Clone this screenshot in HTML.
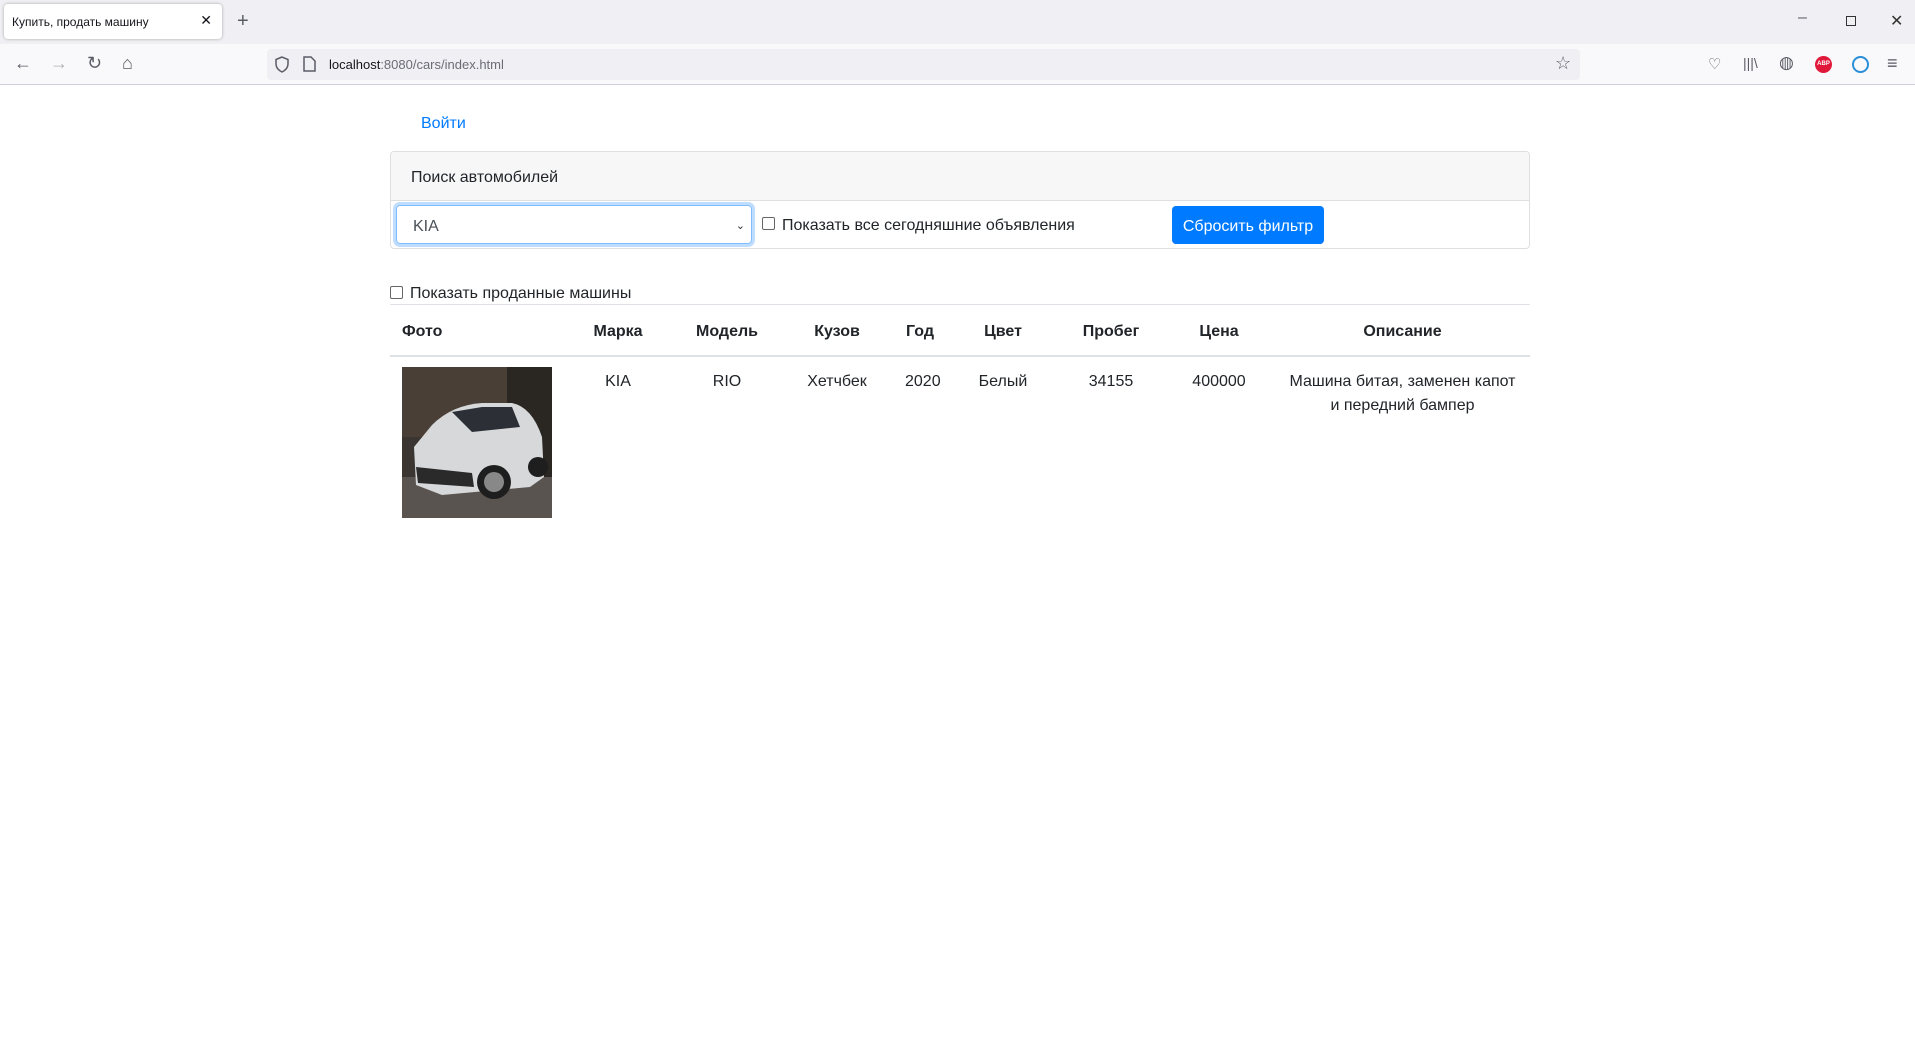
<!DOCTYPE html>
<html><head><meta charset="utf-8"><style>
*{box-sizing:border-box;margin:0;padding:0}
body{width:1915px;height:1038px;overflow:hidden;background:#fff;font-family:"Liberation Sans",sans-serif;color:#212529;position:relative}
.abs{position:absolute}
#tabbar{left:0;top:0;width:1915px;height:44px;background:#f0f0f4}
#tab{left:4px;top:4px;width:218px;height:35px;background:#fff;border-radius:4px;box-shadow:0 0 3px rgba(0,0,0,.3);font-size:12px;padding:11px 0 0 8px;color:#15141a}
#nav{left:0;top:44px;width:1915px;height:41px;background:#f9f9fb;border-bottom:1px solid #cfcfd8}
#url{left:267px;top:49px;width:1313px;height:31px;background:#f0f0f4;border-radius:4px}
.ic{color:#5b5b66;font-size:17px}
.c{font-size:16px;line-height:24px}
table{border-collapse:collapse;table-layout:fixed;position:absolute;left:390px;top:304px;width:1140px;font-size:16px;line-height:24px}
th{font-weight:bold;text-align:center;padding:15px 6px 11px;border-top:1px solid #dee2e6;border-bottom:2px solid #dee2e6}
td{text-align:center;vertical-align:top;padding:13px 12px}
</style></head><body>
<div id="tabbar" class="abs"></div>
<div id="tab" class="abs">Купить, продать машину<span style="position:absolute;right:10px;top:8px;font-size:14px">✕</span></div>
<div class="abs ic" style="left:237px;top:10px;font-size:20px">+</div>
<div class="abs ic" style="left:1798px;top:9px;font-size:16px">–</div>
<div class="abs" style="left:1846px;top:16px;width:10px;height:10px;border:1px solid #333"></div>
<div class="abs ic" style="left:1890px;top:11px;font-size:16px;color:#333">✕</div>
<div id="nav" class="abs"></div>
<div class="abs ic" style="left:14px;top:53px;font-size:18px">←</div>
<div class="abs ic" style="left:50px;top:53px;font-size:18px;color:#b0b0b8">→</div>
<div class="abs ic" style="left:87px;top:53px;font-size:18px">↻</div>
<div class="abs ic" style="left:122px;top:53px;font-size:18px">⌂</div>
<div id="url" class="abs"></div>
<svg class="abs" style="left:274px;top:56px" width="16" height="17" viewBox="0 0 16 17"><path d="M8 1L2 3.5V8c0 4 3 6.5 6 8 3-1.5 6-4 6-8V3.5z" fill="none" stroke="#5b5b66" stroke-width="1.5"/></svg>
<svg class="abs" style="left:303px;top:56px" width="13" height="16" viewBox="0 0 13 16"><path d="M1 1h7l4 4v10H1z" fill="none" stroke="#5b5b66" stroke-width="1.5"/></svg>
<div class="abs" style="left:329px;top:57px;font-size:13px;color:#15141a">localhost<span style="color:#6b6b75">:8080/cars/index.html</span></div>
<div class="abs ic" style="left:1555px;top:53px;font-size:18px">☆</div>
<div class="abs ic" style="left:1708px;top:55px;font-size:15px">♡</div>
<div class="abs ic" style="left:1743px;top:55px;font-size:14px">|||\</div>
<div class="abs ic" style="left:1779px;top:53px;font-size:17px">◍</div>
<div class="abs" style="left:1815px;top:56px;width:17px;height:17px;border-radius:50%;background:#e0183a;color:#fff;font-size:6px;font-weight:bold;text-align:center;line-height:17px">ABP</div>
<div class="abs" style="left:1852px;top:56px;width:17px;height:17px;border-radius:50%;border:2px solid #2a8fd8"></div>
<div class="abs ic" style="left:1887px;top:53px;font-size:18px">≡</div>

<div class="abs c" style="left:421px;top:112px;color:#007bff">Войти</div>
<div class="abs" style="left:390px;top:151px;width:1140px;height:98px;border:1px solid #dfdfdf;border-radius:4px;overflow:hidden">
 <div style="height:49px;background:#f7f7f7;border-bottom:1px solid #dfdfdf;padding:14px 20px 10px;font-size:16px;line-height:24px">Поиск автомобилей</div>
</div>
<div class="abs c" style="left:396px;top:205px;width:356px;height:39px;border:1px solid #80bdff;border-radius:4px;box-shadow:0 0 0 3px rgba(0,123,255,.25);padding:9px 16px 5px;color:#495057">KIA<span style="position:absolute;right:6px;top:8px;font-size:11px;color:#333">⌄</span></div>
<div class="abs" style="left:762px;top:217px;width:13px;height:13px;border:1px solid #666;border-radius:2px"></div>
<div class="abs c" style="left:782px;top:214px">Показать все сегодняшние объявления</div>
<div class="abs c" style="left:1172px;top:206px;width:152px;height:38px;background:#007bff;border-radius:4px;color:#fff;text-align:center;padding-top:9px">Сбросить фильтр</div>
<div class="abs" style="left:390px;top:286px;width:13px;height:13px;border:1px solid #666;border-radius:2px"></div>
<div class="abs c" style="left:410px;top:282px">Показать проданные машины</div>

<table>
<colgroup><col style="width:173px"><col style="width:110px"><col style="width:108px"><col style="width:112px"><col style="width:54px"><col style="width:112px"><col style="width:104px"><col style="width:112px"><col style="width:255px"></colgroup>
<tr><th style="text-align:left;padding-left:12px">Фото</th><th>Марка</th><th>Модель</th><th>Кузов</th><th>Год</th><th>Цвет</th><th>Пробег</th><th>Цена</th><th>Описание</th></tr>
<tr><td style="text-align:left;padding-top:10px">
<svg width="150" height="151" viewBox="0 0 150 151" style="display:block">
<rect width="150" height="151" fill="#3a3530"/>
<rect x="0" y="0" width="150" height="70" fill="#4a3f36"/>
<rect x="105" y="0" width="45" height="151" fill="#2a2622"/>
<rect x="0" y="110" width="150" height="41" fill="#5a5450"/>
<path d="M12 80 L30 58 Q50 38 80 36 L110 36 Q130 40 140 70 L142 110 L128 120 L40 128 L14 118 Z" fill="#d6d8da"/>
<path d="M50 45 L80 40 L110 40 L118 60 L70 65 Z" fill="#2c3036"/>
<path d="M14 100 L70 106 L72 120 L16 116 Z" fill="#2a2a2a"/>
<circle cx="92" cy="115" r="17" fill="#1e1e1e"/><circle cx="92" cy="115" r="10" fill="#888"/>
<circle cx="136" cy="100" r="10" fill="#1e1e1e"/>
</svg></td>
<td>KIA</td><td>RIO</td><td>Хетчбек</td><td>2020</td><td>Белый</td><td>34155</td><td>400000</td><td>Машина битая, заменен капот и передний бампер</td></tr>
</table>
</body></html>
